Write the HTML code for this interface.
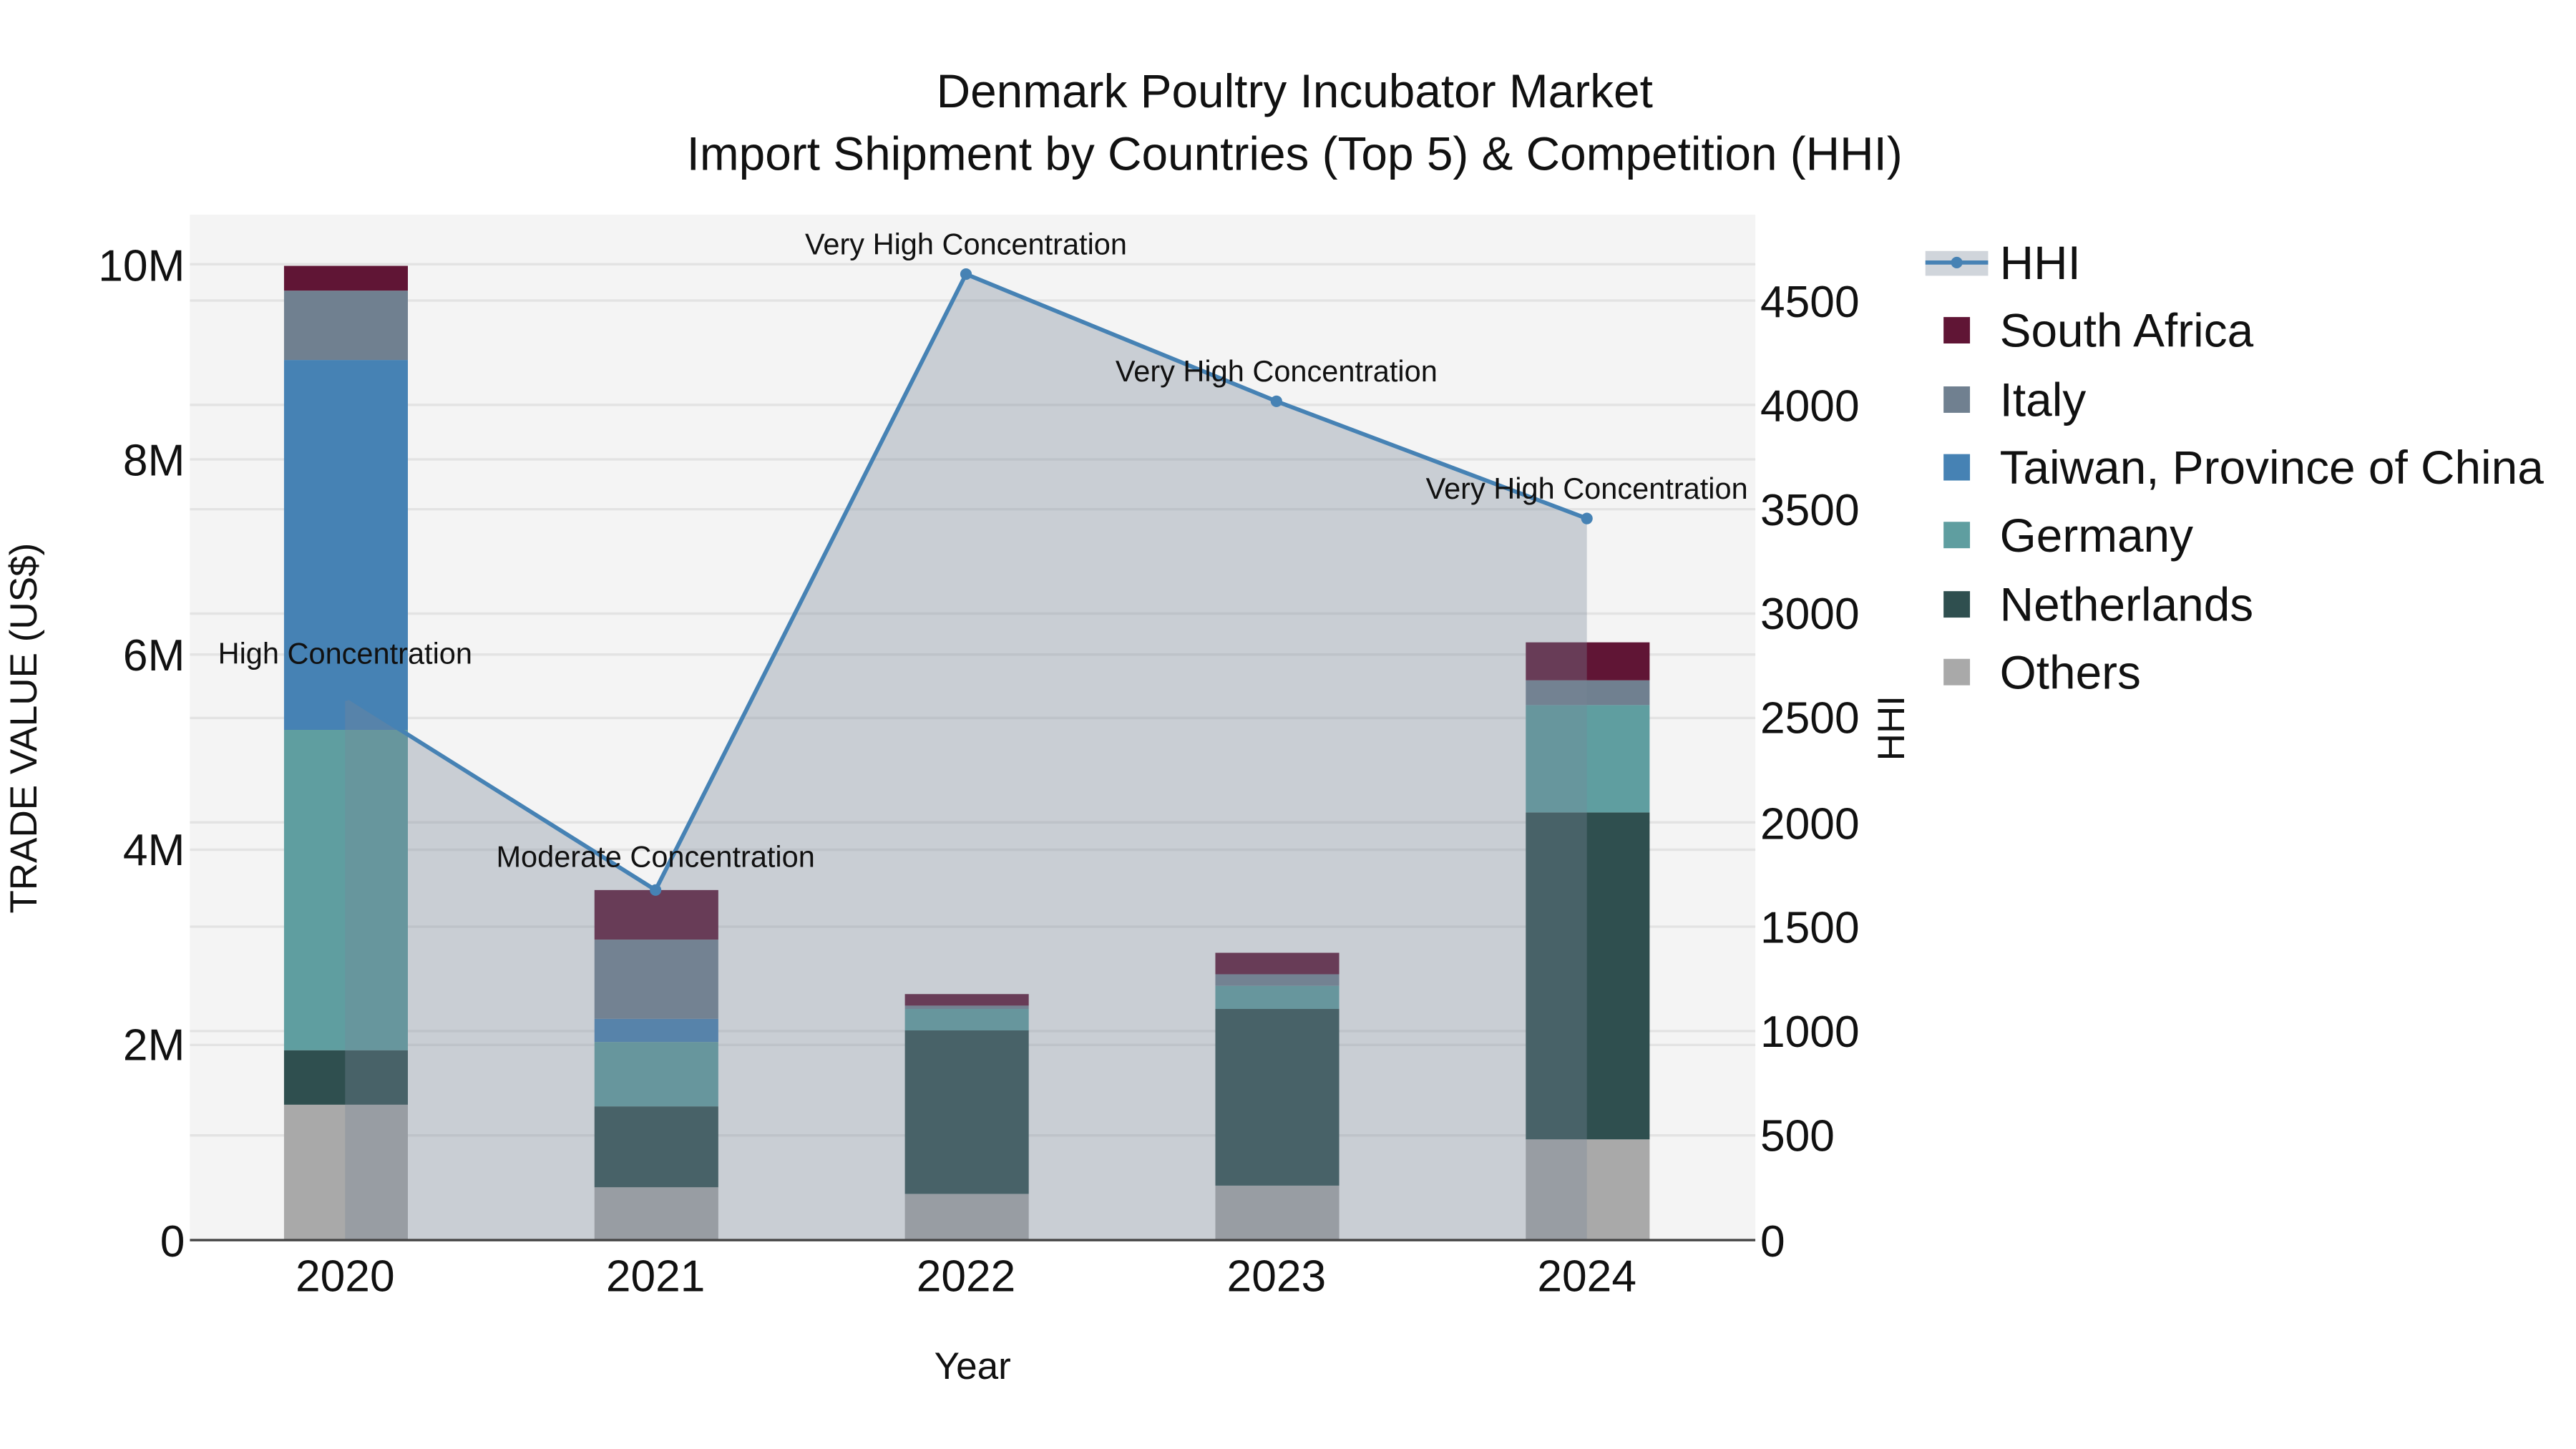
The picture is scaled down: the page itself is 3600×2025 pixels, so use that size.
<!DOCTYPE html>
<html><head><meta charset="utf-8"><style>
html,body{margin:0;padding:0;background:#fff;}
svg{display:block;}
text{font-family:"Liberation Sans",Arial,sans-serif;fill:#111;}
</style></head><body>
<svg width="3600" height="2025" viewBox="0 0 1560 877.5" xmlns="http://www.w3.org/2000/svg">
<rect x="0" y="0" width="1560" height="877.5" fill="#fff"/>
<rect x="115" y="130" width="948" height="621" fill="#f4f4f4"/>
<g stroke="#e3e3e3" stroke-width="1.5">
<line x1="115" x2="1063" y1="160" y2="160"/>
<line x1="115" x2="1063" y1="278.2" y2="278.2"/>
<line x1="115" x2="1063" y1="396.4" y2="396.4"/>
<line x1="115" x2="1063" y1="514.6" y2="514.6"/>
<line x1="115" x2="1063" y1="632.8" y2="632.8"/>
<line x1="115" x2="1063" y1="182" y2="182"/>
<line x1="115" x2="1063" y1="245.2" y2="245.2"/>
<line x1="115" x2="1063" y1="308.4" y2="308.4"/>
<line x1="115" x2="1063" y1="371.6" y2="371.6"/>
<line x1="115" x2="1063" y1="434.8" y2="434.8"/>
<line x1="115" x2="1063" y1="498" y2="498"/>
<line x1="115" x2="1063" y1="561.2" y2="561.2"/>
<line x1="115" x2="1063" y1="624.4" y2="624.4"/>
<line x1="115" x2="1063" y1="687.6" y2="687.6"/>
</g>
<g>
<rect x="172" y="669" width="75" height="82" fill="#a9a9a9"/>
<rect x="172" y="636" width="75" height="33" fill="#2f4f4f"/>
<rect x="172" y="442" width="75" height="194" fill="#5f9ea0"/>
<rect x="172" y="218" width="75" height="224" fill="#4682b4"/>
<rect x="172" y="176" width="75" height="42" fill="#708090"/>
<rect x="172" y="161" width="75" height="15" fill="#601535"/>
<rect x="360" y="719" width="75" height="32" fill="#a9a9a9"/>
<rect x="360" y="670" width="75" height="49" fill="#2f4f4f"/>
<rect x="360" y="631" width="75" height="39" fill="#5f9ea0"/>
<rect x="360" y="617" width="75" height="14" fill="#4682b4"/>
<rect x="360" y="569" width="75" height="48" fill="#708090"/>
<rect x="360" y="539" width="75" height="30" fill="#601535"/>
<rect x="548" y="723" width="75" height="28" fill="#a9a9a9"/>
<rect x="548" y="624" width="75" height="99" fill="#2f4f4f"/>
<rect x="548" y="611" width="75" height="13" fill="#5f9ea0"/>
<rect x="548" y="609" width="75" height="2" fill="#708090"/>
<rect x="548" y="602" width="75" height="7" fill="#601535"/>
<rect x="736" y="718" width="75" height="33" fill="#a9a9a9"/>
<rect x="736" y="611" width="75" height="107" fill="#2f4f4f"/>
<rect x="736" y="597" width="75" height="14" fill="#5f9ea0"/>
<rect x="736" y="590" width="75" height="7" fill="#708090"/>
<rect x="736" y="577" width="75" height="13" fill="#601535"/>
<rect x="924" y="690" width="75" height="61" fill="#a9a9a9"/>
<rect x="924" y="492" width="75" height="198" fill="#2f4f4f"/>
<rect x="924" y="427" width="75" height="65" fill="#5f9ea0"/>
<rect x="924" y="412" width="75" height="15" fill="#708090"/>
<rect x="924" y="389" width="75" height="23" fill="#601535"/>
</g>
<polygon points="209,751 209,421 397,539 585,166 773,243 961,314 961,751" fill="rgba(119,136,153,0.35)"/>
<polyline points="209,421 397,539 585,166 773,243 961,314" fill="none" stroke="#4682b4" stroke-width="2.5"/>
<g fill="#4682b4">
<circle cx="209" cy="421" r="3.5"/><circle cx="397" cy="539" r="3.5"/><circle cx="585" cy="166" r="3.5"/><circle cx="773" cy="243" r="3.5"/><circle cx="961" cy="314" r="3.5"/>
</g>
<line x1="115" x2="1063" y1="751" y2="751" stroke="#444" stroke-width="1.5"/>
<g font-size="18" text-anchor="middle">
<text x="209" y="402">High Concentration</text>
<text x="397" y="525">Moderate Concentration</text>
<text x="585" y="154">Very High Concentration</text>
<text x="773" y="231">Very High Concentration</text>
<text x="961" y="302">Very High Concentration</text>
</g>
<g font-size="27" text-anchor="end">
<text x="112" y="170">10M</text>
<text x="112" y="288">8M</text>
<text x="112" y="406">6M</text>
<text x="112" y="524">4M</text>
<text x="112" y="642">2M</text>
<text x="112" y="761">0</text>
</g>
<g font-size="27" text-anchor="start">
<text x="1066" y="192">4500</text>
<text x="1066" y="255">4000</text>
<text x="1066" y="318">3500</text>
<text x="1066" y="381">3000</text>
<text x="1066" y="444">2500</text>
<text x="1066" y="508">2000</text>
<text x="1066" y="571">1500</text>
<text x="1066" y="634">1000</text>
<text x="1066" y="697">500</text>
<text x="1066" y="761">0</text>
</g>
<g font-size="27" text-anchor="middle">
<text x="209" y="782">2020</text>
<text x="397" y="782">2021</text>
<text x="585" y="782">2022</text>
<text x="773" y="782">2023</text>
<text x="961" y="782">2024</text>
</g>
<text x="589" y="835" font-size="23" text-anchor="middle">Year</text>
<text transform="translate(22,441) rotate(-90)" font-size="23" text-anchor="middle">TRADE VALUE (US$)</text>
<text transform="translate(1153,441) rotate(-90)" font-size="23" text-anchor="middle">HHI</text>
<text x="784" y="65" font-size="28.5" text-anchor="middle">Denmark Poultry Incubator Market</text>
<text x="784" y="103" font-size="28.5" text-anchor="middle">Import Shipment by Countries (Top 5) &amp; Competition (HHI)</text>
<rect x="1166" y="152" width="38" height="15" fill="rgba(119,136,153,0.35)"/>
<line x1="1166" x2="1204" y1="159" y2="159" stroke="#4682b4" stroke-width="2.5"/>
<circle cx="1185" cy="159" r="3.5" fill="#4682b4"/>
<rect x="1177" y="192" width="16" height="16" fill="#601535"/>
<rect x="1177" y="234" width="16" height="16" fill="#708090"/>
<rect x="1177" y="275" width="16" height="16" fill="#4682b4"/>
<rect x="1177" y="316" width="16" height="16" fill="#5f9ea0"/>
<rect x="1177" y="358" width="16" height="16" fill="#2f4f4f"/>
<rect x="1177" y="399" width="16" height="16" fill="#a9a9a9"/>
<g font-size="28.5">
<text x="1211" y="169">HHI</text>
<text x="1211" y="210">South Africa</text>
<text x="1211" y="252">Italy</text>
<text x="1211" y="293">Taiwan, Province of China</text>
<text x="1211" y="334">Germany</text>
<text x="1211" y="376">Netherlands</text>
<text x="1211" y="417">Others</text>
</g>
</svg>
</body></html>
